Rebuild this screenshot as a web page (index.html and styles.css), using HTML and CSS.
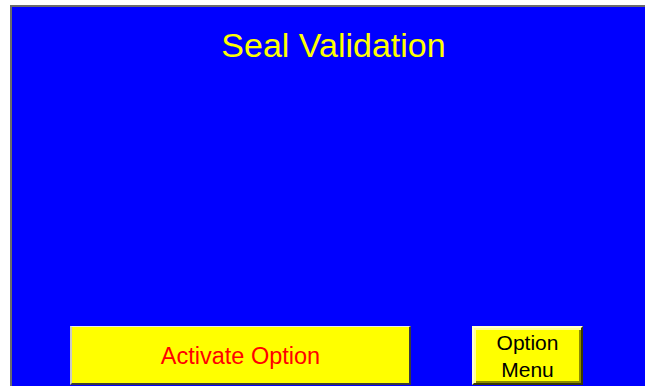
FILE: index.html
```html
<!DOCTYPE html>
<html lang="en">
<head>
  <meta charset="UTF-8" />
  <title>Seal Validation</title>
  <link rel="stylesheet" href="styles.css">
</head>
<body>
  <div class="screen">
    <h1 class="title">Seal Validation</h1>

    <div class="controls">
      <button class="btn-activate">Activate Option</button>
      <button class="btn-menu">Option<br>Menu</button>
    </div>
  </div>
</body>
</html>
```

FILE: styles.css
```css
body {
  margin: 0;
  background: #ffffff;
  font-family: "Liberation Sans", Arial, sans-serif;
  overflow: hidden;
}
.screen {
  margin: 5px 0 0 10px;
  height: 381px;
  background: #0000ff;
  border-top: 2px solid #6b6b6b;
  border-left: 2px solid #6b6b6b;
  box-sizing: border-box;
  display: flex;
  flex-direction: column;
}
.title {
  margin: 0;
  padding: 18px 0 0 10px;
  line-height: 40px;
  text-align: center;
  font-weight: normal;
  font-size: 34px;
  color: #ffff00;
}
.controls {
  margin-top: auto;
  display: flex;
  align-items: flex-end;
  padding: 0 0 1px 58px;
  gap: 61px;
}
button {
  font-family: "Liberation Sans", Arial, sans-serif;
  background: #ffff00;
  padding: 0;
  height: 59px;
  box-sizing: border-box;
}
.btn-activate {
  width: 341px;
  font-size: 23.5px;
  padding-top: 3px;
  color: #ff0000;
  border-style: solid;
  border-width: 1px 2px 2px 2px;
  border-color: #e8e8e8 #3a3a3a #3a3a3a #c8c8c8;
}
.btn-menu {
  width: 111px;
  font-size: 21px;
  color: #000000;
  line-height: 27px;
  border-style: solid;
  border-width: 2px;
  border-color: #ffffcc #3a3a00 #3a3a00 #ffffcc;
  box-shadow: inset 2px 2px 0 #ffff99, inset -2px -2px 0 #8c8c00;
}
```
